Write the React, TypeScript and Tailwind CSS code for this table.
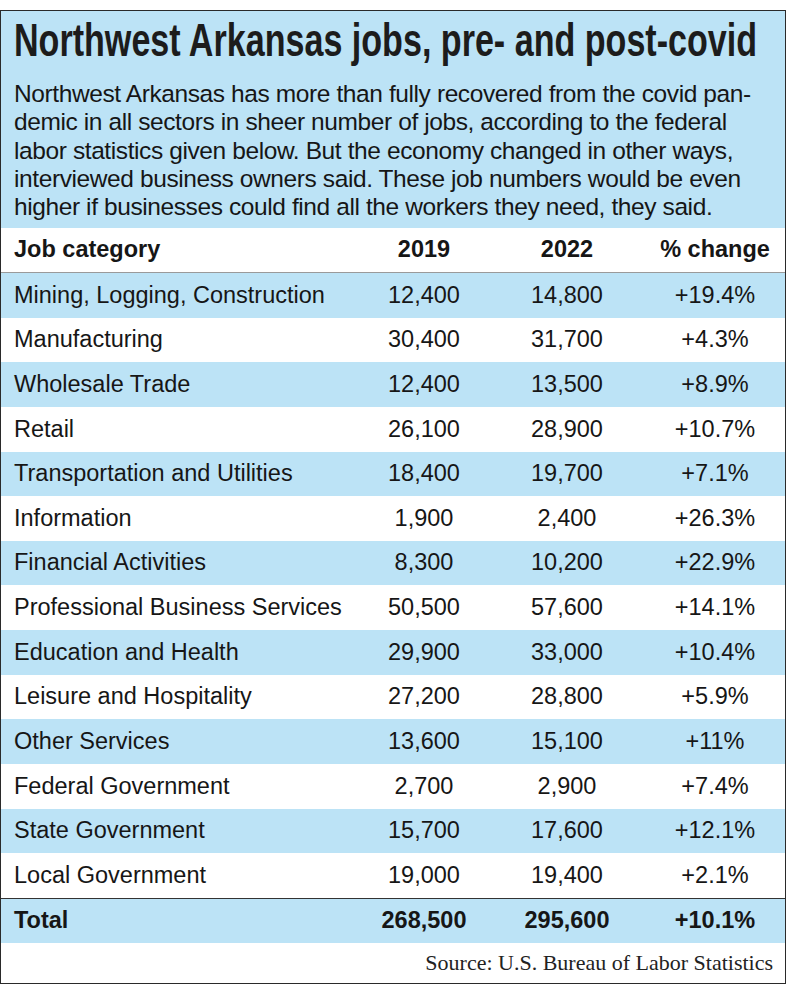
const rows: [string, string, string, string][] = [
  ["Mining, Logging, Construction", "12,400", "14,800", "+19.4%"],
  ["Manufacturing", "30,400", "31,700", "+4.3%"],
  ["Wholesale Trade", "12,400", "13,500", "+8.9%"],
  ["Retail", "26,100", "28,900", "+10.7%"],
  ["Transportation and Utilities", "18,400", "19,700", "+7.1%"],
  ["Information", "1,900", "2,400", "+26.3%"],
  ["Financial Activities", "8,300", "10,200", "+22.9%"],
  ["Professional Business Services", "50,500", "57,600", "+14.1%"],
  ["Education and Health", "29,900", "33,000", "+10.4%"],
  ["Leisure and Hospitality", "27,200", "28,800", "+5.9%"],
  ["Other Services", "13,600", "15,100", "+11%"],
  ["Federal Government", "2,700", "2,900", "+7.4%"],
  ["State Government", "15,700", "17,600", "+12.1%"],
  ["Local Government", "19,000", "19,400", "+2.1%"],
];

const intro = [
  "Northwest Arkansas has more than fully recovered from the covid pan-",
  "demic in all sectors in sheer number of jobs, according to the federal",
  "labor statistics given below. But the economy changed in other ways,",
  "interviewed business owners said. These job numbers would be even",
  "higher if businesses could find all the workers they need, they said.",
];

const grid = "grid grid-cols-[348px_150px_136px_1fr] items-center";

export default function App() {
  return (
    <div className="bg-white w-[800px] h-[996px] pt-[10px] font-['Liberation_Sans',Arial,sans-serif] text-[#161616]">
      <div className="w-[786px] border border-[#2a2a2a] flex flex-col">
        <div className="bg-[#bce3f6] h-[217px] pl-[13px] pt-[3px]">
          {/* no condensed face installed, so squeeze the bold sans */}
          <h1 className="font-bold text-[46px] leading-[52px] whitespace-nowrap origin-left scale-x-[0.741] text-[#1c1c1c]">
            Northwest Arkansas jobs, pre- and post-covid
          </h1>
          <div className="mt-[14px] text-[24.5px] leading-[28.3px] tracking-[-0.4px]">
            {intro.map((l) => (
              <div key={l} className="whitespace-nowrap">{l}</div>
            ))}
          </div>
        </div>

        <div className={`${grid} h-[45px] border-b border-[#9a9a9a] font-bold text-[23.5px]`}>
          <div className="pl-[13px]">Job category</div>
          <div className="text-center">2019</div>
          <div className="text-center">2022</div>
          <div className="text-center pl-[10px]">% change</div>
        </div>

        {rows.map((r, i) => (
          <div
            key={r[0]}
            className={`${grid} h-[44.64px] text-[23.5px] ${i % 2 === 0 ? "bg-[#bce3f6]" : "bg-white"}`}
          >
            <div className="pl-[13px] whitespace-nowrap">{r[0]}</div>
            <div className="text-center">{r[1]}</div>
            <div className="text-center">{r[2]}</div>
            <div className="text-center pl-[10px]">{r[3]}</div>
          </div>
        ))}

        <div className={`${grid} h-[45px] border-t border-[#333] bg-[#bce3f6] font-bold text-[23.5px]`}>
          <div className="pl-[13px]">Total</div>
          <div className="text-center">268,500</div>
          <div className="text-center">295,600</div>
          <div className="text-center pl-[10px]">+10.1%</div>
        </div>

        <div className="h-[40px] flex items-center justify-end pr-[12px] font-['Liberation_Serif','Times_New_Roman',serif] text-[22px] text-[#222]">
          Source: U.S. Bureau of Labor Statistics
        </div>
      </div>
    </div>
  );
}
